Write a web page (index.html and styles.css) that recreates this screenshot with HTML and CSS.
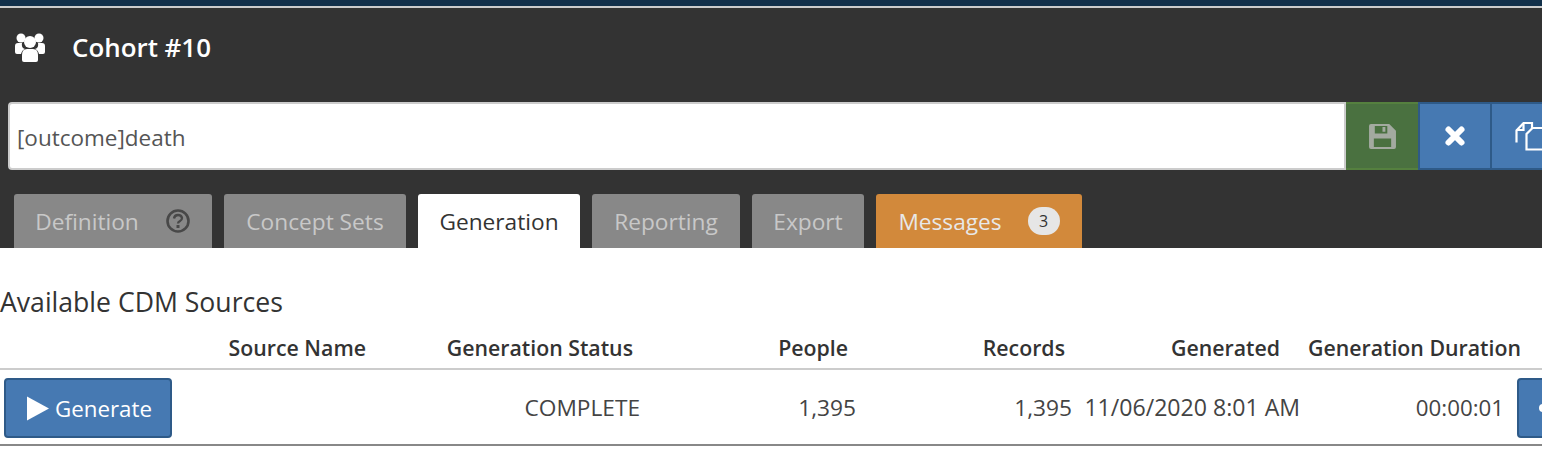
FILE: index.html
```html
<!DOCTYPE html>
<html lang="en">
<head>
<meta charset="utf-8">
<title>Cohort #10</title>
<link rel="stylesheet" href="styles.css">
</head>
<body>
<div class="topbar"></div>
<header class="panel">
  <div class="title">
    <svg class="title-icon" viewBox="0 0 32 30" aria-hidden="true"><circle cx="7" cy="6" r="4.5" fill="#fff"/><circle cx="25" cy="6" r="4.5" fill="#fff"/><circle cx="16" cy="10" r="6" fill="#fff"/><path d="M1 20v-6q0-3 3-3h4q-1 5 3 6-3 1-4 5H3q-2 0-2-2zM31 20v-6q0-3-3-3h-4q1 5-3 6 3 1 4 5h4q2 0 2-2z" fill="#fff"/><path d="M8 23q0-6 5-6h6q5 0 5 6v5q0 2-2 2H10q-2 0-2-2z" fill="#fff"/></svg>
    <span class="title-text">Cohort #10</span>
  </div>
  <div class="namebar">
    <input class="name-input" type="text" value="[outcome]death">
    <button class="tool tool-save" type="button" aria-label="Save">
      <svg viewBox="0 0 28 26" width="27" height="25" aria-hidden="true"><path fill="#a3aaa0" fill-rule="evenodd" d="M2 0h19l7 7v17q0 2-2 2H2q-2 0-2-2V2q0-2 2-2zM6 2v8h13V2zM14 3h3v5h-3zM5 15v9h18v-9z"/></svg>
    </button>
    <button class="tool tool-blue" type="button" aria-label="Close">
      <svg viewBox="0 0 22 22" width="22" height="22" aria-hidden="true"><path fill="none" stroke="#fff" stroke-width="6" stroke-linecap="round" d="M4.5 4.5l13 13M17.500 4.500l-13 13"/></svg>
    </button>
    <button class="tool tool-blue tool-copy" type="button" aria-label="Copy">
      <svg viewBox="0 0 30 30" width="30" height="30" aria-hidden="true"><path fill="none" stroke="#fff" stroke-width="2.200" d="M1.500 21.500V9.500l7-7.500h8.500v7"/><path fill="none" stroke="#fff" stroke-width="2.200" d="M8.500 2v7h-7"/><path fill="#4679b2" stroke="#fff" stroke-width="2.200" d="M11.500 28.500V13l6-6h12v21.500z"/></svg>
    </button>
  </div>
  <nav class="tabs">
    <div class="tab tab-def">Definition<svg class="help" viewBox="0 0 26 26" width="26" height="26" aria-hidden="true"><circle cx="13" cy="13" r="10.500" fill="none" stroke="#484848" stroke-width="2.600"/><path d="M9 10.500q.5-3.500 4-3.500t4 3q0 2-2 3t-2 2.500" fill="none" stroke="#484848" stroke-width="2.300"/><rect x="11.500" y="17" width="3" height="3" fill="#484848"/></svg></div>
    <div class="tab tab-sets">Concept Sets</div>
    <div class="tab tab-active">Generation</div>
    <div class="tab tab-rep">Reporting</div>
    <div class="tab tab-exp">Export</div>
    <div class="tab tab-msg">Messages<span class="badge">3</span></div>
  </nav>
</header>
<main class="content">
  <h2 class="heading">Available CDM Sources</h2>
  <div class="grid head">
    <div></div>
    <div class="c-name">Source Name</div>
    <div class="c-status">Generation Status</div>
    <div class="c-people">People</div>
    <div class="c-records">Records</div>
    <div class="c-date">Generated</div>
    <div class="c-dur">Generation Duration</div>
  </div>
  <div class="grid row">
    <div class="gen"><button class="btn" type="button"><svg viewBox="0 0 24 26" width="22" height="25" aria-hidden="true"><path fill="#fff" d="M0 0l24 13L0 26z"/></svg>Generate</button></div>
    <div class="c-name"></div>
    <div class="c-status">COMPLETE</div>
    <div class="c-people">1,395</div>
    <div class="c-records">1,395</div>
    <div class="c-date r-date">11/06/2020 8:01 AM</div>
    <div class="r-dur">00:00:01</div>
    <div class="more"><button class="btn btn-more" type="button" aria-label="View"><span class="dot"></span></button></div>
  </div>
</main>
</body>
</html>
```

FILE: styles.css
```css
* { box-sizing: border-box; }
html, body { margin: 0; padding: 0; }
body {
  width: 1542px;
  height: 460px;
  overflow: hidden;
  background: #fff;
  color: #333;
  font-family: "Open Sans", "Noto Sans", sans-serif;
  font-size: 22.700px;
}
.topbar {
  height: 8px;
  background: #12304a;
  border-bottom: 2px solid #ccc;
}
.panel {
  height: 240px;
  background: #333;
  overflow: hidden;
}
.title {
  display: flex;
  align-items: center;
  height: 94px;
  padding: 0 0 16px 14px;
}
.title-icon { width: 32px; height: 30px; flex: none; }
.title-text {
  margin-left: 26px;
  color: #fff;
  font-size: 25.900px;
  font-weight: 600;
}
.namebar { display: flex; height: 68px; width: 1560px; padding-left: 8px; }
.name-input {
  flex: none;
  width: 1338px;
  height: 68px;
  padding: 2px 7px 0;
  border: 2px solid #ccc;
  border-radius: 4px 0 0 4px;
  background: #fff;
  color: #555;
  font: inherit;
  font-size: 22.500px;
  outline: 0;
}
.tool {
  display: flex;
  align-items: center;
  justify-content: center;
  height: 68px;
  padding: 0;
  border: 0;
  flex: none;
}
.tool-save { width: 72px; background: #4a7140; border-top: 2px solid #55803f; border-bottom: 2px solid #55803f; }
.tool-blue {
  width: 72px;
  background: #4679b2;
  border: 2px solid #2e5a88;
  border-right-width: 0;
}
.tool-copy { justify-content: flex-start; padding-left: 23px; }
.tabs { display: flex; gap: 12px; margin-top: 24px; padding-left: 14px; height: 54px; }
.tab {
  display: flex;
  align-items: center;
  justify-content: center;
  height: 54px;
  background: #888;
  color: #c8c8c8;
  border-radius: 3px 3px 0 0;
  white-space: nowrap;
}
.tab-def { width: 198px; gap: 26px; }
.tab-sets { width: 182px; }
.tab-active { width: 162px; background: #fff; color: #333; }
.tab-rep { width: 148px; }
.tab-exp { width: 112px; }
.tab-msg { width: 206px; background: #d2893b; color: #e8e8e8; gap: 26px; }
.badge {
  display: flex;
  align-items: center;
  justify-content: center;
  width: 32px;
  height: 28px;
  border-radius: 14px;
  background: #e6e6e6;
  color: #333;
  font-size: 16px;
}
.heading {
  margin: 0;
  padding-top: 36px;
  height: 83px;
  font-size: 26.600px;
  font-weight: 400;
  line-height: 36px;
}
.grid {
  display: grid;
  grid-template-columns: 176px 190px 274px 216px 216px 228px 205px 37px;
  width: 1542px;
  text-align: right;
  white-space: nowrap;
}
.head {
  height: 39px;
  border-bottom: 2px solid #ccc;
  font-size: 21.300px;
  font-weight: 600;
  line-height: 34px;
}
.head .c-status { padding-right: 7px; }
.head .c-people { padding-right: 8px; }
.head .c-records { padding-right: 7px; }
.head .c-date { padding-right: 20px; }
.head .c-dur { grid-column: 7 / 9; padding-right: 21px; }
.row {
  height: 76px;
  align-items: center;
  border-bottom: 2px solid #888;
  color: #444;
}
.gen { padding: 2px 0 0 4px; }
.btn {
  display: flex;
  align-items: center;
  gap: 6px;
  width: 168px;
  height: 60px;
  padding: 0 0 0 21px;
  border: 2px solid #2e5a88;
  border-radius: 4px;
  background: #4679b2;
  color: #fff;
  font: inherit;
  font-size: 22.300px;
}
.r-date { font-size: 23.100px; }
.r-dur { padding-right: 1px; font-size: 22.300px; }
.more { padding: 2px 0 0 12px; }
.btn-more { width: 60px; padding-left: 20px; }
.dot { width: 8px; height: 8px; border-radius: 50%; background: #fff; }
```
